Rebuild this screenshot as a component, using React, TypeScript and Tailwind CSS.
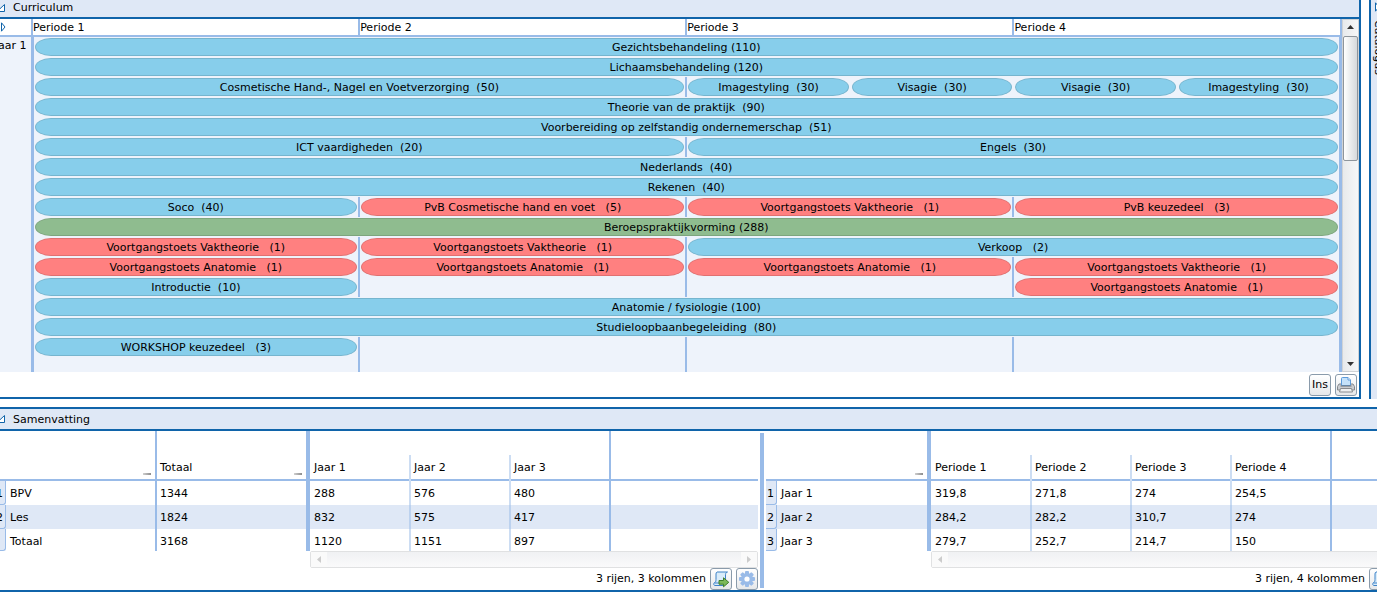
import React from 'react';
import clsx from 'clsx';

type Kind = 'les' | 'toets' | 'bpv';

interface Bar {
  label: string;
  hours: number;
  span: number;
  kind?: Kind;
  // half period bars have no divider in front of them
  noLine?: boolean;
}

// every row counts 8 units, two for each period. null is an empty period
const rows: (Bar | null)[][] = [
  [{ label: 'Gezichtsbehandeling', hours: 110, span: 8 }],
  [{ label: 'Lichaamsbehandeling', hours: 120, span: 8 }],
  [
    { label: 'Cosmetische Hand-, Nagel en Voetverzorging', hours: 50, span: 4 },
    { label: 'Imagestyling', hours: 30, span: 1 },
    { label: 'Visagie', hours: 30, span: 1, noLine: true },
    { label: 'Visagie', hours: 30, span: 1, noLine: true },
    { label: 'Imagestyling', hours: 30, span: 1, noLine: true },
  ],
  [{ label: 'Theorie van de praktijk', hours: 90, span: 8 }],
  [{ label: 'Voorbereiding op zelfstandig ondernemerschap', hours: 51, span: 8 }],
  [
    { label: 'ICT vaardigheden', hours: 20, span: 4 },
    { label: 'Engels', hours: 30, span: 4 },
  ],
  [{ label: 'Nederlands', hours: 40, span: 8 }],
  [{ label: 'Rekenen', hours: 40, span: 8 }],
  [
    { label: 'Soco', hours: 40, span: 2 },
    { label: 'PvB Cosmetische hand en voet', hours: 5, span: 2, kind: 'toets' },
    { label: 'Voortgangstoets Vaktheorie', hours: 1, span: 2, kind: 'toets' },
    { label: 'PvB keuzedeel', hours: 3, span: 2, kind: 'toets' },
  ],
  [{ label: 'Beroepspraktijkvorming', hours: 288, span: 8, kind: 'bpv' }],
  [
    { label: 'Voortgangstoets Vaktheorie', hours: 1, span: 2, kind: 'toets' },
    { label: 'Voortgangstoets Vaktheorie', hours: 1, span: 2, kind: 'toets' },
    { label: 'Verkoop', hours: 2, span: 4 },
  ],
  [
    { label: 'Voortgangstoets Anatomie', hours: 1, span: 2, kind: 'toets' },
    { label: 'Voortgangstoets Anatomie', hours: 1, span: 2, kind: 'toets' },
    { label: 'Voortgangstoets Anatomie', hours: 1, span: 2, kind: 'toets' },
    { label: 'Voortgangstoets Vaktheorie', hours: 1, span: 2, kind: 'toets' },
  ],
  [
    { label: 'Introductie', hours: 10, span: 2 },
    null,
    null,
    { label: 'Voortgangstoets Anatomie', hours: 1, span: 2, kind: 'toets' },
  ],
  [{ label: 'Anatomie / fysiologie', hours: 100, span: 8 }],
  [{ label: 'Studieloopbaanbegeleiding', hours: 80, span: 8 }],
  [{ label: 'WORKSHOP keuzedeel', hours: 3, span: 2 }, null, null, null],
];

const kindColor: Record<Kind, string> = {
  les: 'bg-[#87ceeb]',
  toets: 'bg-[#ff8080]',
  bpv: 'bg-[#8fbc8f]',
};

const CollapseIcon = () => (
  <svg width="6" height="9" viewBox="0 0 6 9" className="block shrink-0">
    <path d="M-3 7.5 L4.5 0.5 V7.5 Z" fill="#fff" stroke="#1064aa" />
  </svg>
);

const ExpandIcon = () => (
  <svg width="6" height="10" viewBox="0 0 6 10" className="block shrink-0">
    <path d="M1.5 0.8 L5 5 L1.5 9.2 Z" fill="#fff" stroke="#1064aa" />
  </svg>
);

const PrinterIcon = () => (
  <svg width="18" height="18" viewBox="0 0 18 18">
    <path d="M2 8 H16 L17.5 10.5 V14 H0.5 V10.5 Z" fill="#c9ccd0" stroke="#85888c" />
    <path d="M4.5 9.5 V2.5 Q4.5 1.5 5.5 1.5 H11 L13.5 4 V9.5 Z" fill="#c5e2fa" stroke="#5c9bdb" />
    <path d="M11 1.5 V4 H13.5" fill="#fff" stroke="#5c9bdb" />
    <path d="M3.5 10 H14.5" stroke="#6f7276" />
    <path d="M3.5 12.5 H14.5 L15.5 16 H2.5 Z" fill="#eff0f1" stroke="#8a8c8f" />
  </svg>
);

const ExportIcon = () => (
  <svg width="18" height="18" viewBox="0 0 18 18">
    <path
      d="M5 2 H15.5 C13.5 2.5 13.5 4 13.5 6 V12 C13.5 14.5 12.5 15.5 11 15.5 H3 C1.5 15.5 1 13 3 12.5 C4 12 4 10 4 8 V4 C4 3 4.3 2.3 5 2 Z"
      fill="#d9ecfa"
      stroke="#3f83c8"
    />
    <path d="M2.5 13 H10" stroke="#3f83c8" />
    <path d="M7 10.5 H11.5 V7.8 L16.8 12.3 L11.5 16.8 V14.2 H7 Z" fill="#7cb95a" stroke="#3f7f2c" />
  </svg>
);

const GearIcon = () => (
  <svg width="18" height="18" viewBox="0 0 18 18">
    <g fill="#99bbe8">
      {[0, 45, 90, 135].map((a) => (
        <rect key={a} x="7" y="1" width="4" height="16" rx="1" transform={`rotate(${a} 9 9)`} />
      ))}
      <circle cx="9" cy="9" r="6" />
    </g>
    <circle cx="9" cy="9" r="2.6" fill="#fff" />
  </svg>
);

const ToolButton: React.FC<{ label: string; children: React.ReactNode }> = ({ label, children }) => (
  <button
    type="button"
    aria-label={label}
    className="flex h-[22px] min-w-[22px] shrink-0 items-center justify-center rounded-[3px] border border-[#8a9bab] bg-linear-to-b from-white to-[#e6e8ea]"
  >
    {children}
  </button>
);

const PanelHeader: React.FC<{ title: string; className: string }> = ({ title, className }) => (
  <div className={clsx('flex items-center gap-[7px] border-b-2 border-[#1064aa] bg-[#dfe8f6]', className)}>
    <CollapseIcon />
    <h2>{title}</h2>
  </div>
);

const CurriculumTable = () => (
  <table className="w-full table-fixed border-collapse bg-[#eef3fb]">
    <colgroup>
      <col className="w-8" />
      {Array.from({ length: 8 }, (_, i) => (
        <col key={i} />
      ))}
    </colgroup>
    <thead className="bg-white">
      <tr className="h-[17px] border-b-2 border-[#99bbe8]">
        <th className="p-0">
          <ExpandIcon />
        </th>
        {[1, 2, 3, 4].map((p) => (
          <th key={p} colSpan={2} className="border-x-2 border-[#99bbe8] p-0 pt-px text-left leading-[15px] font-normal">
            Periode {p}
          </th>
        ))}
      </tr>
    </thead>
    <tbody>
      {rows.map((row, i) => (
        <tr key={i}>
          {i === 0 && (
            <th
              rowSpan={rows.length + 1}
              className="border-r-3 border-[#99bbe8] p-0 pt-px align-top font-normal"
            >
              <div className="flex justify-end overflow-hidden pr-1 whitespace-nowrap">Jaar 1</div>
            </th>
          )}
          {row.map((bar, j) => (
            <td
              key={j}
              colSpan={bar ? bar.span : 2}
              className={clsx(
                'border-[#99bbe8] p-0',
                i === 0 ? 'h-[21px]' : 'h-5',
                j > 0 && !bar?.noLine && 'border-l-2',
                j === row.length - 1 && 'border-r-3',
              )}
            >
              {bar && (
                <div
                  className={clsx(
                    'mx-px h-[18px] rounded-[16px/9px] border border-black/12 text-center leading-[18px] whitespace-pre',
                    bar.noLine && 'ml-0.5',
                    kindColor[bar.kind ?? 'les'],
                  )}
                >
                  {`${bar.label} ${`(${bar.hours})`.padStart(5, ' ')}`}
                </div>
              )}
            </td>
          ))}
        </tr>
      ))}
      <tr>
        {[1, 2, 3, 4].map((p) => (
          <td
            key={p}
            colSpan={2}
            className={clsx('h-[15px] border-[#99bbe8] p-0', p > 1 && 'border-l-2', p === 4 && 'border-r-3')}
          />
        ))}
      </tr>
    </tbody>
  </table>
);

const VerticalScroll = () => (
  <div className="flex w-[17px] shrink-0 flex-col items-center border border-[#d0d3d6] bg-linear-to-r from-[#e8eaec] to-[#f6f7f8]">
    <svg width="7" height="16" viewBox="0 0 7 16">
      <path d="M0 9 L3.5 5 L7 9 Z" fill="#333" />
    </svg>
    <div className="h-[125px] w-[15px] rounded-[2px] border border-[#8e959c] bg-linear-to-r from-white to-[#d5d9dc]" />
    <svg width="7" height="16" viewBox="0 0 7 16" className="mt-auto">
      <path d="M0 7 L3.5 11 L7 7 Z" fill="#333" />
    </svg>
  </div>
);

const HorizontalScroll: React.FC<{ className: string }> = ({ className }) => (
  <div
    className={clsx(
      'flex h-[17px] items-center justify-between rounded-[2px] border border-[#e0e1e2] bg-linear-to-b from-[#f0f1f3] to-[#fafafb]',
      className,
    )}
  >
    <svg width="16" height="15" viewBox="0 0 16 15">
      <rect width="16" height="15" fill="#fafafa" />
      <path d="M10 4 L6 7.5 L10 11 Z" fill="#ccc" />
    </svg>
    <svg width="16" height="15" viewBox="0 0 16 15">
      <rect width="16" height="15" fill="#fafafa" />
      <path d="M6 4 L10 7.5 L6 11 Z" fill="#ccc" />
    </svg>
  </div>
);

const Minimize = () => <span className="mb-1 h-0.5 w-2 bg-linear-to-r from-[#d0d0d0] to-[#8c8c8c]" />;

interface SummaryProps {
  numberWidth: string;
  fixed: { title: string; width: string }[];
  columns: string[];
  data: { nr: string; values: string[] }[];
}

const SummaryTable: React.FC<SummaryProps> = ({ numberWidth, fixed, columns, data }) => {
  const lineFor = (i: number) => {
    if (i < fixed.length - 1) return 'border-r-2 border-[#99bbe8]';
    if (i === fixed.length - 1) return 'border-r-4 border-[#99bbe8]';
    if (i === fixed.length + columns.length - 1) return 'border-r-2 border-[#99bbe8]';
    return 'border-r-2 border-[#99bbe8]/50';
  };

  // only the first column of each block has the wider padding
  const padFor = (i: number) => (i === 0 || i === fixed.length ? 'pl-1' : 'pl-[3px]');

  return (
    <table className="w-full table-fixed border-separate border-spacing-0">
      <colgroup>
        <col className={numberWidth} />
        {fixed.map((f, i) => (
          <col key={i} className={f.width} />
        ))}
        {columns.map((c, i) => (
          <col key={c} className={i === 0 ? 'w-[101px]' : 'w-[100px]'} />
        ))}
        <col />
      </colgroup>
      <thead>
        <tr className="h-6">
          <td className="border-b-2 border-[#99bbe8] p-0" rowSpan={2} />
          {fixed.map((f, i) => (
            <th key={i} rowSpan={2} className={clsx('p-0 align-bottom font-normal', lineFor(i))}>
              <div className="flex h-[50px] items-end justify-between border-b-2 border-[#99bbe8] pr-1 pl-[3px]">
                <span className="leading-[22px]">{f.title}</span>
                <Minimize />
              </div>
            </th>
          ))}
          <td colSpan={columns.length} className="border-r-2 border-[#99bbe8] p-0" />
          <td className="border-b-2 border-[#99bbe8] p-0" rowSpan={2} />
        </tr>
        <tr className="h-[26px]">
          {columns.map((c, i) => (
            <th key={c} className={clsx('p-0 text-left font-normal', lineFor(fixed.length + i))}>
              <div className={clsx('h-[26px] border-b-2 border-[#99bbe8] leading-[26px]', padFor(fixed.length + i))}>
                {c}
              </div>
            </th>
          ))}
        </tr>
      </thead>
      <tbody>
        {data.map((row, r) => (
          <tr key={r} className={clsx(r % 2 === 1 && 'bg-[#dfe8f6]', r < data.length - 1 ? 'h-6' : 'h-[22px]')}>
            <th className="p-0 align-top font-normal">
              <div
                className={clsx(
                  'flex justify-end rounded-br-[3px] border-r border-b border-[#99bbe8] bg-[#dfe8f6] pr-0.5 leading-[26px]',
                  r < data.length - 1 ? 'h-6' : 'h-[22px]',
                )}
              >
                {row.nr}
              </div>
            </th>
            {row.values.map((v, i) => (
              <td key={i} className={clsx('p-0 align-top', lineFor(i))}>
                <div className={clsx('h-[22px] leading-[26px]', padFor(i))}>{v}</div>
              </td>
            ))}
            <td className="p-0" />
          </tr>
        ))}
      </tbody>
    </table>
  );
};

const SummaryFooter: React.FC<{ text: string }> = ({ text }) => (
  <div className="flex items-center justify-end gap-1">
    <span className="leading-[22px]">{text}</span>
    <ToolButton label="Exporteren">
      <ExportIcon />
    </ToolButton>
    <ToolButton label="Instellingen">
      <GearIcon />
    </ToolButton>
  </div>
);

const App: React.FC = () => {
  return (
    <div className="overflow-hidden bg-white font-['DejaVu_Sans',Verdana,sans-serif] text-[11px] leading-4 text-black">
      <div className="flex gap-2">
        <section className="min-w-0 flex-1 border-r-2 border-b-2 border-[#1064aa]">
          <PanelHeader title="Curriculum" className="h-[19px] pb-px" />
          <div className="flex">
            <div className="min-w-0 flex-1">
              <CurriculumTable />
            </div>
            <VerticalScroll />
          </div>
          <div className="flex h-[25px] items-center justify-end gap-1 pr-0.5">
            <ToolButton label="Ins">
              <span className="px-0.5">Ins</span>
            </ToolButton>
            <ToolButton label="Afdrukken">
              <PrinterIcon />
            </ToolButton>
          </div>
        </section>
        <aside className="flex w-2 shrink-0 flex-col items-start overflow-hidden border-l-2 border-[#1064aa] bg-[#dfe8f6] pt-0.5">
          <div className="pl-[3px]">
            <ExpandIcon />
          </div>
          <div className="mt-2 leading-[14px] [writing-mode:vertical-rl]">Catalogus</div>
        </aside>
      </div>

      <section className="mt-2 border-y-2 border-[#1064aa]">
        <PanelHeader title="Samenvatting" className="h-[22px] pt-px" />
        <div className="grid grid-cols-[760fr_4px_613fr]">
          <div className="min-w-0 pr-0.5">
            <SummaryTable
              numberWidth="w-[6px]"
              fixed={[
                { title: '', width: 'w-[151px]' },
                { title: 'Totaal', width: 'w-[153px]' },
              ]}
              columns={['Jaar 1', 'Jaar 2', 'Jaar 3']}
              data={[
                { nr: '1', values: ['BPV', '1344', '288', '576', '480'] },
                { nr: '2', values: ['Les', '1824', '832', '575', '417'] },
                { nr: '', values: ['Totaal', '3168', '1120', '1151', '897'] },
              ]}
            />
            <HorizontalScroll className="ml-[310px]" />
            <SummaryFooter text="3 rijen, 3 kolommen" />
          </div>
          <div className="my-0.5 bg-[#99bbe8]" />
          <div className="-mr-10 min-w-0 pl-0.5">
            <SummaryTable
              numberWidth="w-[11px]"
              fixed={[{ title: '', width: 'w-[154px]' }]}
              columns={['Periode 1', 'Periode 2', 'Periode 3', 'Periode 4']}
              data={[
                { nr: '1', values: ['Jaar 1', '319,8', '271,8', '274', '254,5'] },
                { nr: '2', values: ['Jaar 2', '284,2', '282,2', '310,7', '274'] },
                { nr: '3', values: ['Jaar 3', '279,7', '252,7', '214,7', '150'] },
              ]}
            />
            <HorizontalScroll className="ml-[165px]" />
            <SummaryFooter text="3 rijen, 4 kolommen" />
          </div>
        </div>
      </section>
    </div>
  );
};

export default App;
